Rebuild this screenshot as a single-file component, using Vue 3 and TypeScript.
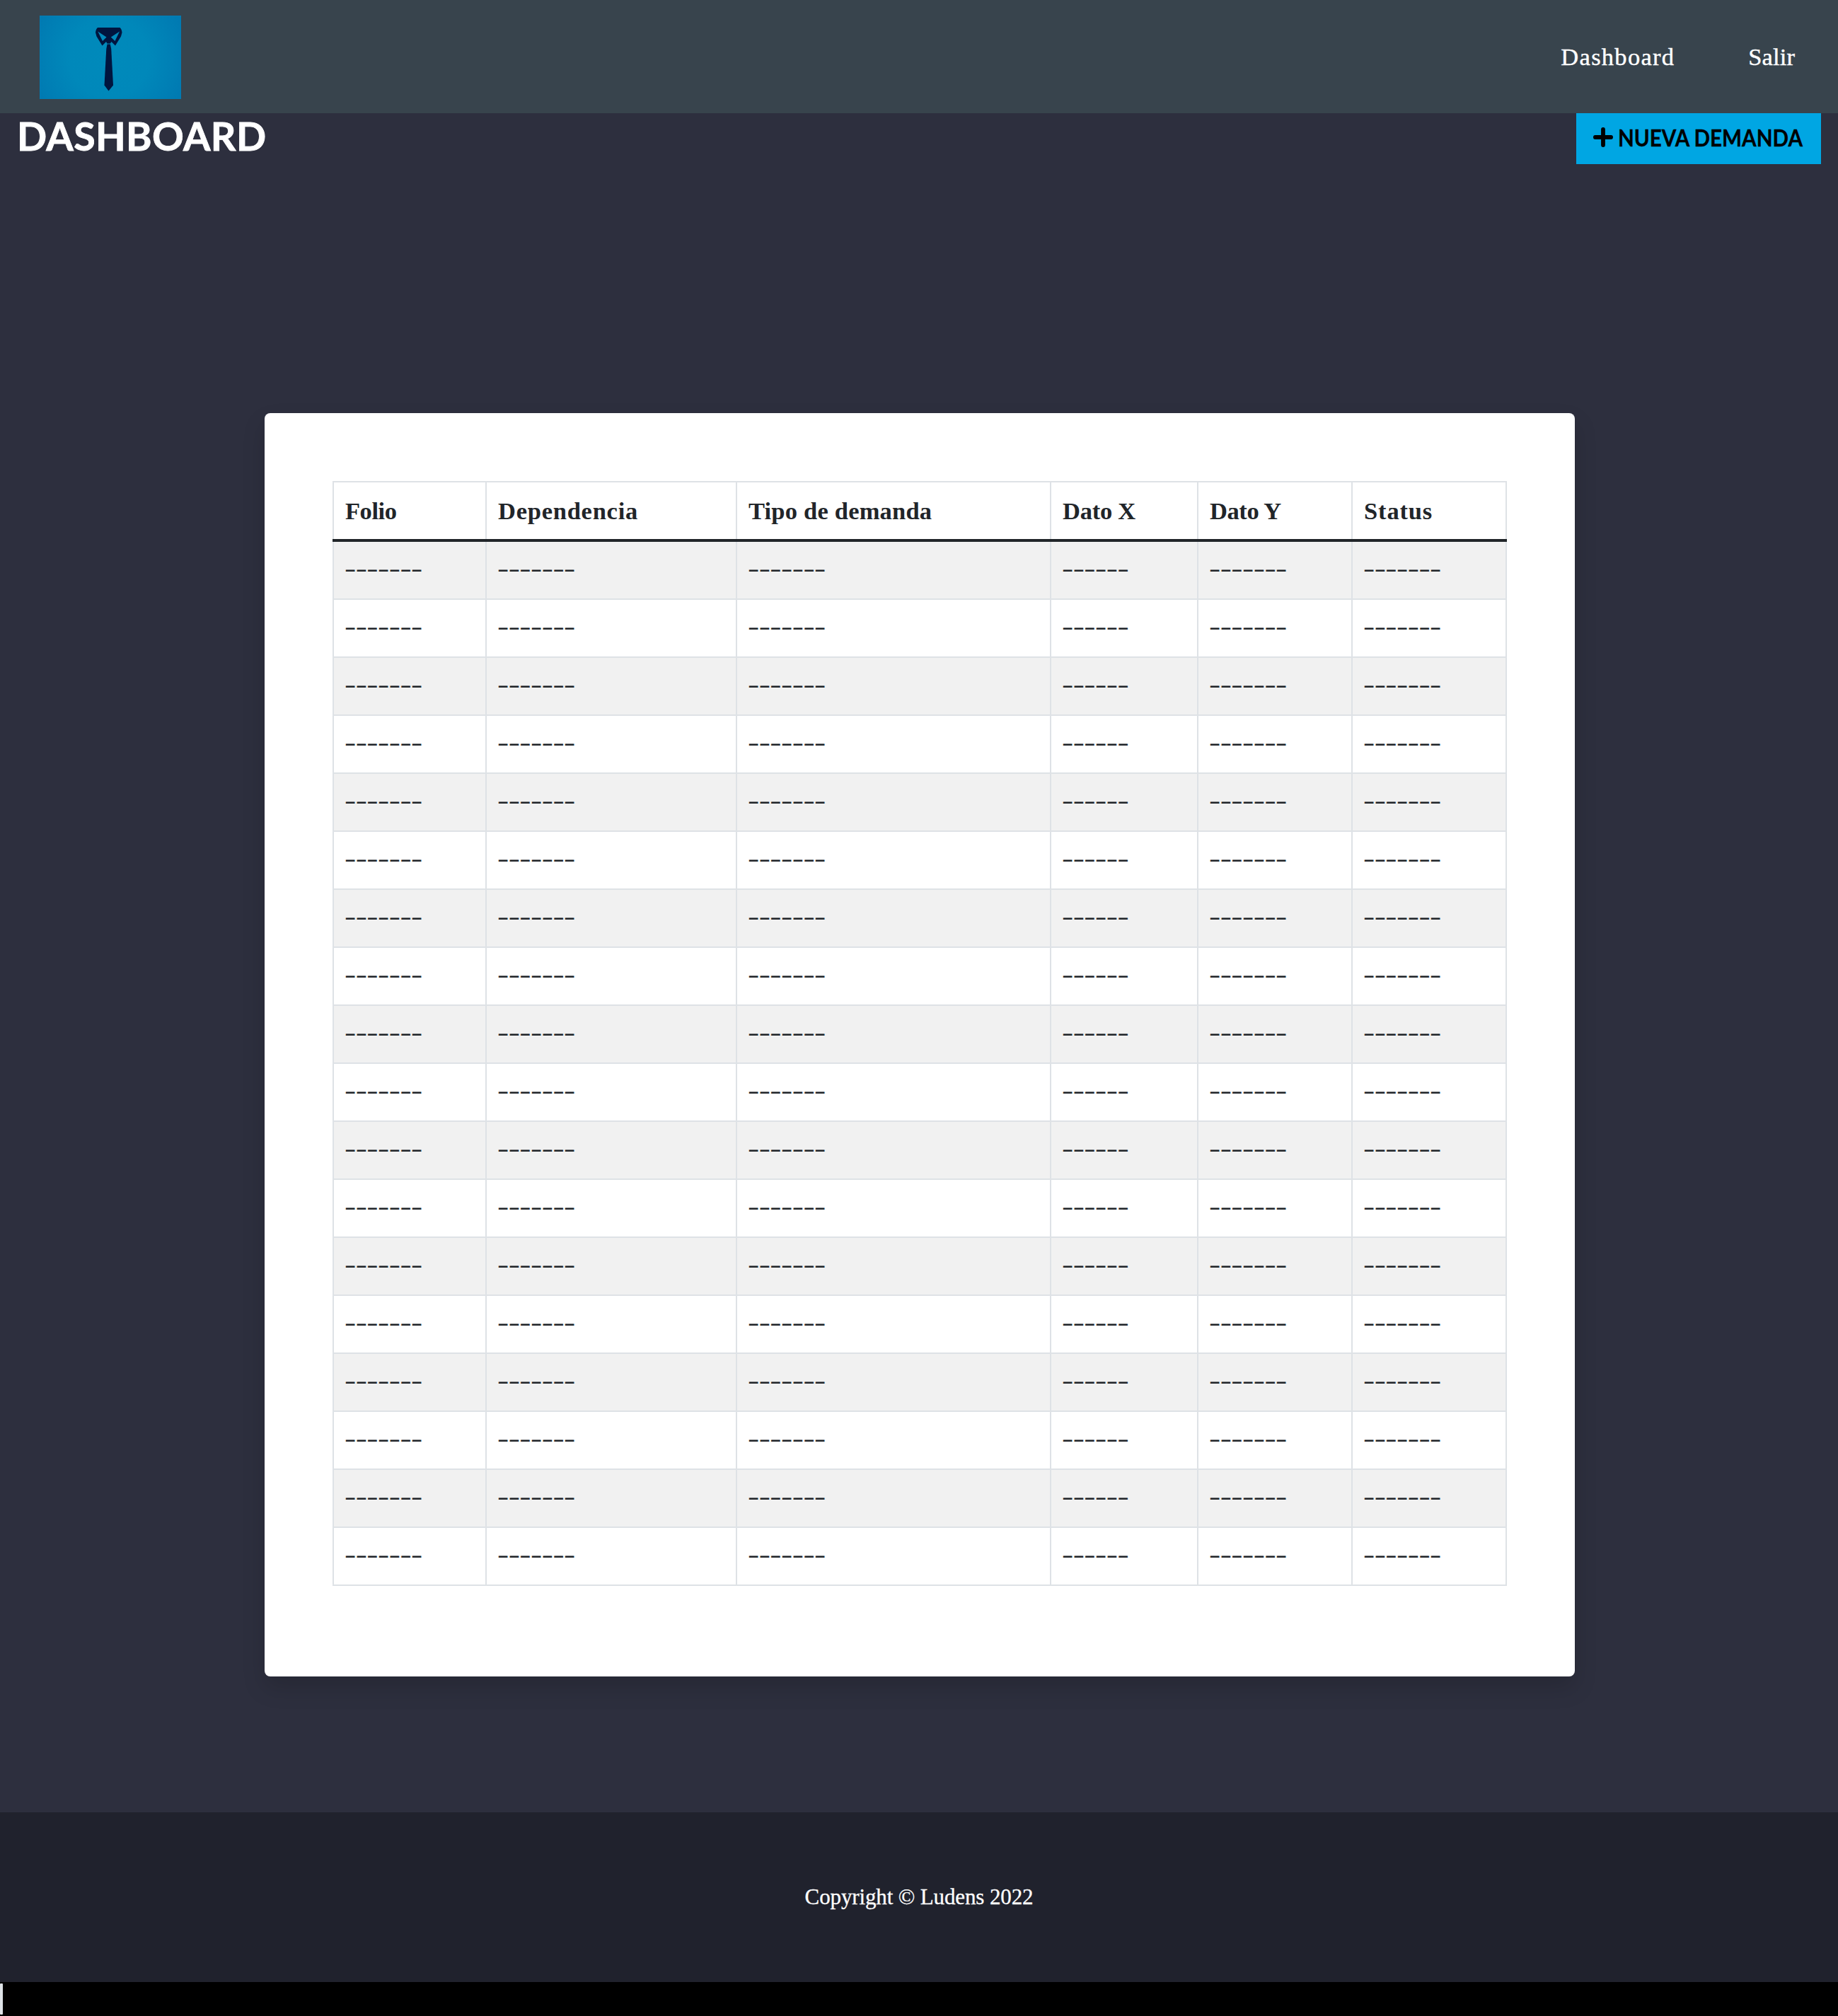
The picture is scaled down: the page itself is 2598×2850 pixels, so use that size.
<script setup lang="ts">
interface Column {
  label: string
  width: number
  tracking: number
  placeholder: string
}

const columns: Column[] = [
  { label: 'Folio', width: 216, tracking: -0.45, placeholder: '-------' },
  { label: 'Dependencia', width: 354, tracking: 0.75, placeholder: '-------' },
  { label: 'Tipo de demanda', width: 444, tracking: 0.2, placeholder: '-------' },
  { label: 'Dato X', width: 208, tracking: -0.25, placeholder: '------' },
  { label: 'Dato Y', width: 218, tracking: -0.4, placeholder: '-------' },
  { label: 'Status', width: 218, tracking: 0.85, placeholder: '-------' },
]
const rowCount = 18
</script>

<template>
  <div class="page">
    <nav class="navbar">
      <svg class="logo" width="200" height="118" viewBox="0 0 200 118" role="img" aria-label="Ludens">
        <defs>
          <radialGradient id="logo-bg" gradientUnits="userSpaceOnUse" cx="98" cy="60" r="112">
            <stop offset="0" stop-color="#008abb" />
            <stop offset="0.5" stop-color="#0088ba" />
            <stop offset="1" stop-color="#007ab2" />
          </radialGradient>
        </defs>
        <rect width="200" height="118" fill="url(#logo-bg)" />
        <path
          fill="#00153f"
          fill-rule="evenodd"
          d="M82 17H113.500Q116 19 116.500 24L115 29.500L107 42.500L101.500 37L99.800 39.500H95.500L94 37L88.500 42.500L80.500 29.500L79 24Q79.500 19 82 17ZM82.300 22.500L89 36L94.500 30.500ZM113 22.500L100.800 30.500L106.500 36Z"
        />
        <path fill="#00153f" d="M95.500 40.500H99.800L101.200 47L104 98.500L97.500 106.500L91.500 98.500L94.300 47Z" />
      </svg>
      <div class="links">
        <a class="link-dashboard">Dashboard</a>
        <a class="link-exit">Salir</a>
      </div>
    </nav>

    <main>
      <header class="heading">
        <h1>DASHBOARD</h1>
        <button type="button" class="new-button">
          <svg width="28" height="28" viewBox="0 0 28 28" aria-hidden="true">
            <path d="M14 2.900V25.100M2.900 14H25.100" stroke="#000" stroke-width="5.800" stroke-linecap="round" />
          </svg>
          <span class="new-label">NUEVA DEMANDA</span>
        </button>
      </header>

      <section class="card">
        <table>
          <colgroup>
            <col v-for="c in columns" :key="c.label" :style="{ width: c.width + 'px' }" />
          </colgroup>
          <thead>
            <tr>
              <th v-for="c in columns" :key="c.label" :style="{ letterSpacing: c.tracking + 'px' }">{{ c.label }}</th>
            </tr>
          </thead>
          <tbody>
            <tr v-for="n in rowCount" :key="n">
              <td v-for="c in columns" :key="c.label"><span class="dashes">{{ c.placeholder }}</span></td>
            </tr>
          </tbody>
        </table>
      </section>
    </main>

    <footer>Copyright © Ludens 2022</footer>
    <div class="bottom"><span class="sliver"></span></div>
  </div>
</template>

<style>
body {
  margin: 0;
  background: #000;
}
</style>

<style scoped>
.page {
  width: 2598px;
  height: 2850px;
  overflow: hidden;
  box-sizing: border-box;
  display: flex;
  flex-direction: column;
  font-family: "Liberation Serif", serif;
  color: #fff;
}
.navbar {
  height: 160px;
  flex: none;
  box-sizing: border-box;
  background: #38444d;
  display: flex;
  justify-content: space-between;
  align-items: flex-start;
  padding: 22px 61px 0 56px;
}
.logo {
  display: block;
}
.links {
  display: flex;
  gap: 104px;
  padding-top: 38px;
  font-size: 34.5px;
  line-height: 40px;
  -webkit-text-stroke: 0.4px #fff;
}
.link-dashboard {
  letter-spacing: 1.28px;
}
.link-exit {
  letter-spacing: 0.1px;
}
main {
  height: 2402px;
  flex: none;
  background: #2d2f3e;
}
.heading {
  height: 424px;
  display: flex;
  justify-content: space-between;
  align-items: flex-start;
  padding: 0 24px;
  font-family: Lato, sans-serif;
}
h1 {
  margin: 0;
  font-size: 55.5px;
  line-height: 64px;
  font-weight: 700;
  letter-spacing: 0.35px;
  -webkit-text-stroke: 0.8px #fff;
}
.new-button {
  width: 346px;
  height: 72px;
  border: 0;
  padding: 0 0 0 24px;
  display: flex;
  align-items: center;
  gap: 7px;
  background: #00a6e3;
  color: #000;
  font: 700 32px/40px Lato, sans-serif;
  white-space: nowrap;
}
.new-button svg {
  flex: none;
  position: relative;
  top: -2px;
}
.new-label {
  transform: translateY(-1px) scaleX(0.926);
  transform-origin: left;
  -webkit-text-stroke: 0.3px #000;
}
.card {
  width: 1852px;
  height: 1786px;
  margin-left: 374px;
  box-sizing: border-box;
  padding: 96px;
  background: #fff;
  border-radius: 8px;
  box-shadow: 0 16px 32px rgba(0, 0, 0, 0.15);
}
table {
  width: 1660px;
  table-layout: fixed;
  border-collapse: collapse;
  color: #212529;
}
th,
td {
  box-sizing: border-box;
  height: 82px;
  padding: 0 0 0 16px;
  border: 2px solid #dee2e6;
  text-align: left;
  vertical-align: middle;
  white-space: nowrap;
  line-height: 40px;
}
th {
  height: 83px;
  font-size: 34.5px;
  font-weight: 700;
  border-bottom: 4px solid #212529;
}
td {
  font-size: 34px;
}
tbody tr:first-child td {
  height: 83px;
}
tbody tr:nth-child(odd) {
  background: #f1f1f1;
}
.dashes {
  display: inline-block;
  transform: translate(-1px, -2px) scaleX(1.43);
  transform-origin: left;
  letter-spacing: -0.36px;
}
footer {
  height: 240px;
  flex: none;
  background: #20222d;
  text-align: center;
  font-size: 31px;
  line-height: 240px;
  letter-spacing: -0.13px;
  -webkit-text-stroke: 0.3px #fff;
}
.bottom {
  height: 48px;
  flex: none;
  display: flex;
  align-items: center;
  background: #000;
}
.sliver {
  width: 4px;
  height: 44px;
  border-radius: 1px;
  background: #dee2e6;
}
</style>
